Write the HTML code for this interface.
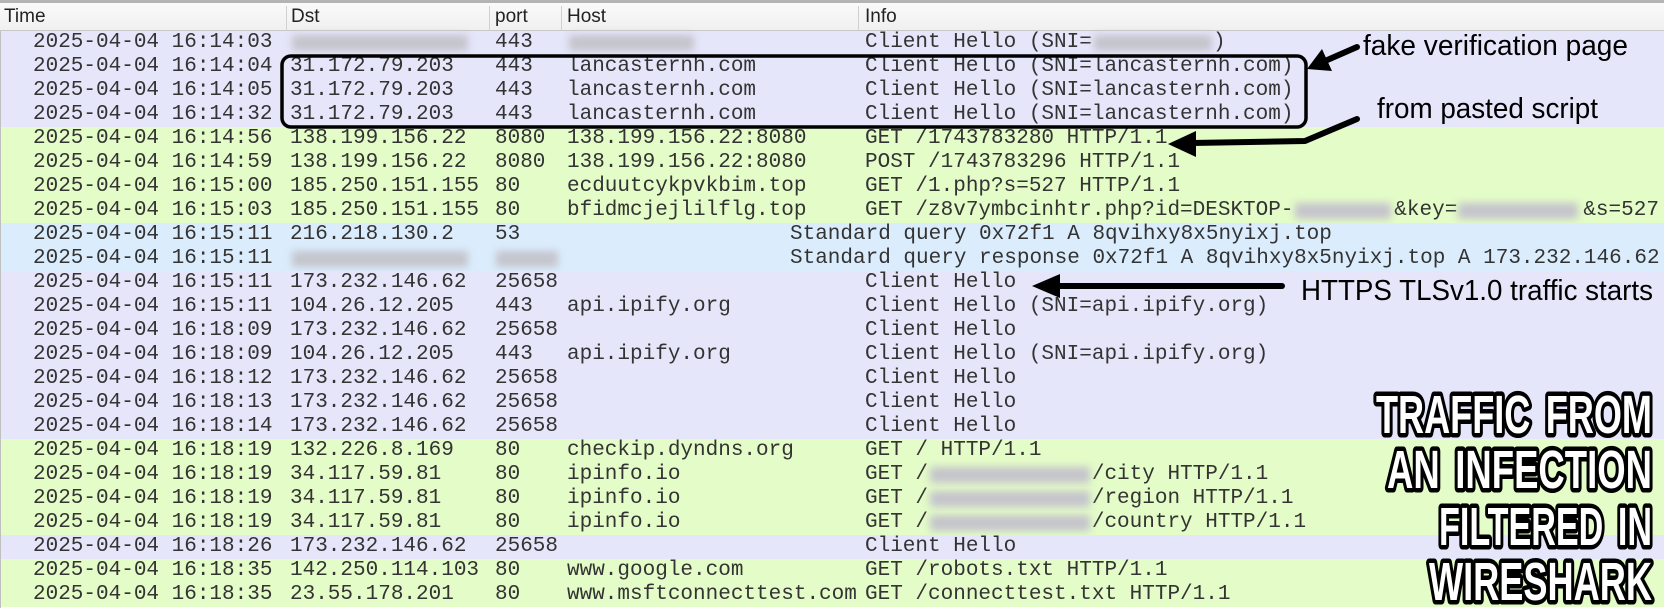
<!DOCTYPE html>
<html><head><meta charset="utf-8">
<style>
*{margin:0;padding:0;box-sizing:border-box}
html,body{width:1664px;height:608px;overflow:hidden;background:#fff}
body{position:relative;font-family:"Liberation Mono",monospace;font-size:21px;color:#333}
.hdr{position:absolute;left:0;top:0;width:1664px;height:31px;background:linear-gradient(#fafafa,#f0f0f0);border-top:3px solid #b4b4b4;border-bottom:1px solid #c8c8c8;font-family:"Liberation Sans",sans-serif;font-size:19px;color:#222}
.hdr span{position:absolute;top:3px}
.sep{position:absolute;top:3px;width:1px;height:27px;background:#d0d0d0}
.r{position:absolute;left:0;width:1664px;height:24px;line-height:24px;white-space:pre}
.r span{position:absolute;top:0}
.L{background:#e6e6fb}.G{background:#e4fcc8}.B{background:#dbedfd}
.t{left:33px}.d{left:290px}.p{left:495px}.h{left:567px}.i{left:865px}.q{left:790px}
.bl{position:absolute;background:#c4c4cc;filter:blur(4px);height:16px;top:4px}
</style></head><body>
<div class="hdr">
<span style="left:4px">Time</span><span style="left:291px">Dst</span><span style="left:495px">port</span><span style="left:567px">Host</span><span style="left:865px">Info</span>
<div class="sep" style="left:286px"></div><div class="sep" style="left:489px"></div><div class="sep" style="left:561px"></div><div class="sep" style="left:858px"></div>
</div>
<div style="position:absolute;left:0;top:31px;width:1px;height:577px;background:#c0c0c0;z-index:2"></div>

<div class="r L" style="top:31px"><span class="t">2025-04-04 16:14:03</span><div class="bl" style="left:292px;width:176px"></div><span class="p">443</span><div class="bl" style="left:569px;width:125px"></div><span class="i">Client Hello (SNI=</span><div class="bl" style="left:1094px;width:118px"></div><span style="left:1213px">)</span></div>
<div class="r L" style="top:55px"><span class="t">2025-04-04 16:14:04</span><span class="d">31.172.79.203</span><span class="p">443</span><span class="h">lancasternh.com</span><span class="i">Client Hello (SNI=lancasternh.com)</span></div>
<div class="r L" style="top:79px"><span class="t">2025-04-04 16:14:05</span><span class="d">31.172.79.203</span><span class="p">443</span><span class="h">lancasternh.com</span><span class="i">Client Hello (SNI=lancasternh.com)</span></div>
<div class="r L" style="top:103px"><span class="t">2025-04-04 16:14:32</span><span class="d">31.172.79.203</span><span class="p">443</span><span class="h">lancasternh.com</span><span class="i">Client Hello (SNI=lancasternh.com)</span></div>
<div class="r G" style="top:127px"><span class="t">2025-04-04 16:14:56</span><span class="d">138.199.156.22</span><span class="p">8080</span><span class="h">138.199.156.22:8080</span><span class="i">GET /1743783280 HTTP/1.1</span></div>
<div class="r G" style="top:151px"><span class="t">2025-04-04 16:14:59</span><span class="d">138.199.156.22</span><span class="p">8080</span><span class="h">138.199.156.22:8080</span><span class="i">POST /1743783296 HTTP/1.1</span></div>
<div class="r G" style="top:175px"><span class="t">2025-04-04 16:15:00</span><span class="d">185.250.151.155</span><span class="p">80</span><span class="h">ecduutcykpvkbim.top</span><span class="i">GET /1.php?s=527 HTTP/1.1</span></div>
<div class="r G" style="top:199px"><span class="t">2025-04-04 16:15:03</span><span class="d">185.250.151.155</span><span class="p">80</span><span class="h">bfidmcjejlilflg.top</span><span class="i">GET /z8v7ymbcinhtr.php?id=DESKTOP-        &amp;key=          &amp;s=527</span><div class="bl" style="left:1295px;width:96px"></div><div class="bl" style="left:1458px;width:120px"></div></div>
<div class="r B" style="top:223px"><span class="t">2025-04-04 16:15:11</span><span class="d">216.218.130.2</span><span class="p">53</span><span class="q">Standard query 0x72f1 A 8qvihxy8x5nyixj.top</span></div>
<div class="r B" style="top:247px"><span class="t">2025-04-04 16:15:11</span><div class="bl" style="left:292px;width:176px"></div><div class="bl" style="left:496px;width:62px"></div><span class="q">Standard query response 0x72f1 A 8qvihxy8x5nyixj.top A 173.232.146.62</span></div>
<div class="r L" style="top:271px"><span class="t">2025-04-04 16:15:11</span><span class="d">173.232.146.62</span><span class="p">25658</span><span class="i">Client Hello</span></div>
<div class="r L" style="top:295px"><span class="t">2025-04-04 16:15:11</span><span class="d">104.26.12.205</span><span class="p">443</span><span class="h">api.ipify.org</span><span class="i">Client Hello (SNI=api.ipify.org)</span></div>
<div class="r L" style="top:319px"><span class="t">2025-04-04 16:18:09</span><span class="d">173.232.146.62</span><span class="p">25658</span><span class="i">Client Hello</span></div>
<div class="r L" style="top:343px"><span class="t">2025-04-04 16:18:09</span><span class="d">104.26.12.205</span><span class="p">443</span><span class="h">api.ipify.org</span><span class="i">Client Hello (SNI=api.ipify.org)</span></div>
<div class="r L" style="top:367px"><span class="t">2025-04-04 16:18:12</span><span class="d">173.232.146.62</span><span class="p">25658</span><span class="i">Client Hello</span></div>
<div class="r L" style="top:391px"><span class="t">2025-04-04 16:18:13</span><span class="d">173.232.146.62</span><span class="p">25658</span><span class="i">Client Hello</span></div>
<div class="r L" style="top:415px"><span class="t">2025-04-04 16:18:14</span><span class="d">173.232.146.62</span><span class="p">25658</span><span class="i">Client Hello</span></div>
<div class="r G" style="top:439px"><span class="t">2025-04-04 16:18:19</span><span class="d">132.226.8.169</span><span class="p">80</span><span class="h">checkip.dyndns.org</span><span class="i">GET / HTTP/1.1</span></div>
<div class="r G" style="top:463px"><span class="t">2025-04-04 16:18:19</span><span class="d">34.117.59.81</span><span class="p">80</span><span class="h">ipinfo.io</span><span class="i">GET /             /city HTTP/1.1</span><div class="bl" style="left:930px;width:160px"></div></div>
<div class="r G" style="top:487px"><span class="t">2025-04-04 16:18:19</span><span class="d">34.117.59.81</span><span class="p">80</span><span class="h">ipinfo.io</span><span class="i">GET /             /region HTTP/1.1</span><div class="bl" style="left:930px;width:160px"></div></div>
<div class="r G" style="top:511px"><span class="t">2025-04-04 16:18:19</span><span class="d">34.117.59.81</span><span class="p">80</span><span class="h">ipinfo.io</span><span class="i">GET /             /country HTTP/1.1</span><div class="bl" style="left:930px;width:160px"></div></div>
<div class="r L" style="top:535px"><span class="t">2025-04-04 16:18:26</span><span class="d">173.232.146.62</span><span class="p">25658</span><span class="i">Client Hello</span></div>
<div class="r G" style="top:559px"><span class="t">2025-04-04 16:18:35</span><span class="d">142.250.114.103</span><span class="p">80</span><span class="h">www.google.com</span><span class="i">GET /robots.txt HTTP/1.1</span></div>
<div class="r G" style="top:583px"><span class="t">2025-04-04 16:18:35</span><span class="d">23.55.178.201</span><span class="p">80</span><span class="h">www.msftconnecttest.com</span><span class="i">GET /connecttest.txt HTTP/1.1</span></div>

<svg style="position:absolute;left:0;top:0" width="1664" height="608" viewBox="0 0 1664 608">
<rect x="282" y="56" width="1024" height="71" rx="9" ry="9" fill="none" stroke="#000" stroke-width="3.5"/>
<g stroke="#000" stroke-width="6" stroke-linecap="round" stroke-linejoin="round" fill="none">
<line x1="1357" y1="47" x2="1325" y2="61"/>
<polyline points="1357,119 1305,141 1192,143"/>
<line x1="1282" y1="286" x2="1055" y2="286"/>
</g>
<g fill="#000">
<polygon points="1307,69 1332,71 1322,49"/>
<polygon points="1168,144 1196,131 1196,157"/>
<polygon points="1032,286 1060,274 1060,298"/>
</g>
<g font-family="Liberation Sans, sans-serif" fill="#000" font-size="29">
<text x="1363" y="55" textLength="265" lengthAdjust="spacingAndGlyphs">fake verification page</text>
<text x="1377" y="118" textLength="221" lengthAdjust="spacingAndGlyphs">from pasted script</text>
<text x="1301" y="300" textLength="352" lengthAdjust="spacingAndGlyphs">HTTPS TLSv1.0 traffic starts</text>
</g>
<g font-family="Liberation Sans, sans-serif" font-weight="bold" font-size="54" fill="#fff" stroke="#000" stroke-width="9" stroke-linejoin="round" paint-order="stroke" word-spacing="8">
<text x="1376" y="433" textLength="276" lengthAdjust="spacingAndGlyphs">TRAFFIC FROM</text>
<text x="1387" y="488" textLength="265" lengthAdjust="spacingAndGlyphs">AN INFECTION</text>
<text x="1439" y="545" textLength="213" lengthAdjust="spacingAndGlyphs">FILTERED IN</text>
<text x="1429" y="600" textLength="223" lengthAdjust="spacingAndGlyphs">WIRESHARK</text>
</g>
</svg>
</body></html>
